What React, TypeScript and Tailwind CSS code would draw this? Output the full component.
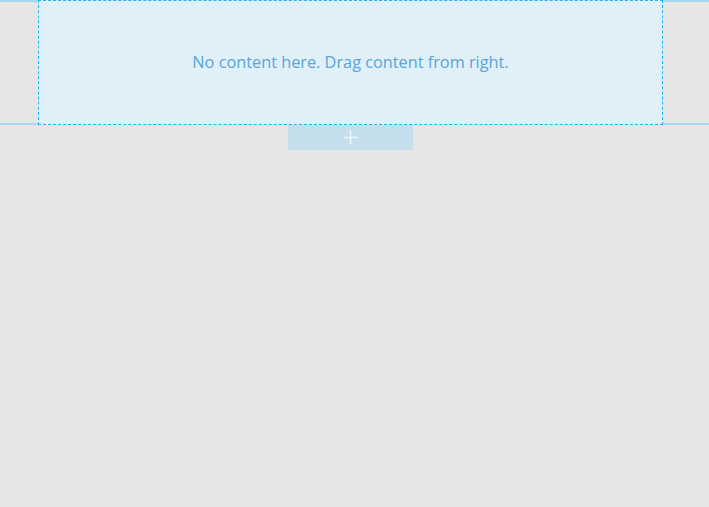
export default function App() {
  return (
    <div
      className="min-h-[507px] w-full bg-[#e6e6e6]"
      style={{ fontFamily: '"Open Sans", "Liberation Sans", sans-serif' }}
    >
      <div className="h-[125px] border-y-2 border-[#a8d6ee]">
        <div className="-mt-[2px] ml-[38px] flex h-[125px] w-[625px] items-center justify-center border border-dashed border-[#1eb2f0] bg-[#e0f0f8] pb-[1px]">
          <p className="text-[16.3px] text-[#5ba3d8]">
            No content here. Drag content from right.
          </p>
        </div>
      </div>
      <div className="flex justify-center pr-[9px]">
        <button className="flex h-[25px] w-[125px] items-center justify-center bg-[#c5deec] text-[#eef6fb]">
          <svg width="15" height="15" viewBox="0 0 15 15" fill="none">
            <path d="M7.5 0.5v14M0.5 7.5h14" stroke="currentColor" strokeWidth="1.5" />
          </svg>
        </button>
      </div>
    </div>
  );
}
